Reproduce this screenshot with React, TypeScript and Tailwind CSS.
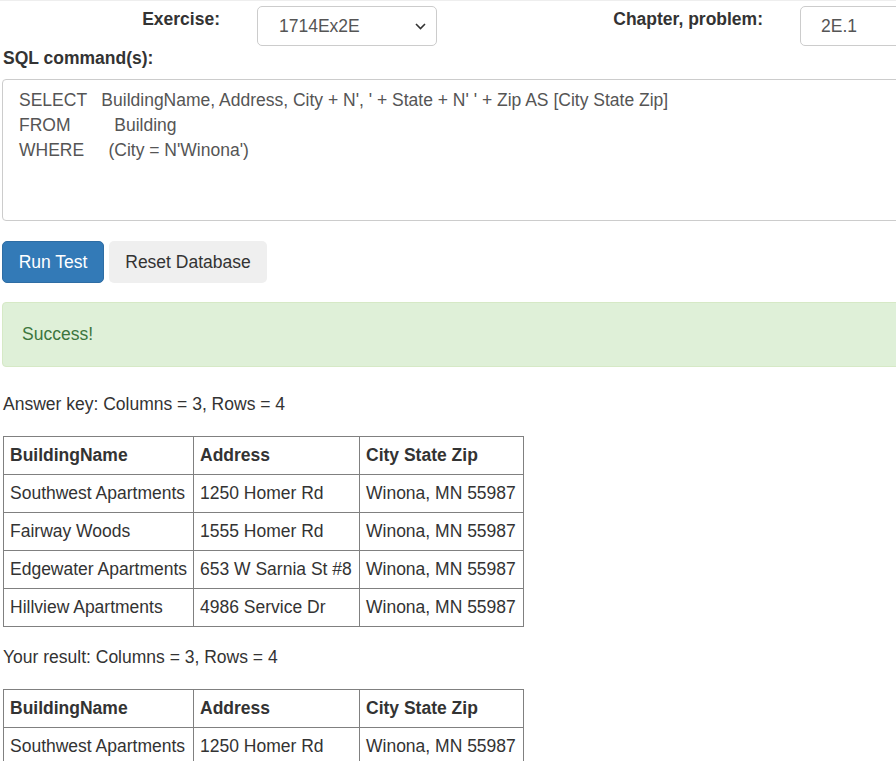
import React from 'react';

const sql = `SELECT   BuildingName, Address, City + N', ' + State + N' ' + Zip AS [City State Zip]
FROM         Building
WHERE     (City = N'Winona')`;

const headers = ['BuildingName', 'Address', 'City State Zip'];

const answerRows = [
  ['Southwest Apartments', '1250 Homer Rd', 'Winona, MN 55987'],
  ['Fairway Woods', '1555 Homer Rd', 'Winona, MN 55987'],
  ['Edgewater Apartments', '653 W Sarnia St #8', 'Winona, MN 55987'],
  ['Hillview Apartments', '4986 Service Dr', 'Winona, MN 55987'],
];

function ResultTable({ rows }: { rows: string[][] }) {
  return (
    <table className="ml-[1px] border-collapse table-fixed w-[520px]">
      <colgroup>
        <col className="w-[190px]" />
        <col className="w-[166px]" />
        <col className="w-[164px]" />
      </colgroup>
      <thead>
        <tr>
          {headers.map((h) => (
            <th key={h} className="border border-[#808080] px-[6px] py-[6px] text-left font-bold whitespace-nowrap">
              {h}
            </th>
          ))}
        </tr>
      </thead>
      <tbody>
        {rows.map((r, i) => (
          <tr key={i}>
            {r.map((c, j) => (
              <td key={j} className="border border-[#808080] px-[6px] py-[6px] whitespace-nowrap">
                {c}
              </td>
            ))}
          </tr>
        ))}
      </tbody>
    </table>
  );
}

export default function App() {
  return (
    <div
      className="w-[896px] h-[761px] overflow-hidden bg-white text-[#333] text-[17.5px] leading-[25px] border-t border-[#eee]"
      style={{ fontFamily: '"Liberation Sans", Arial, sans-serif' }}
    >
      <div className="pl-[2px] w-[1200px]">
        {/* Exercise / chapter row */}
        <div className="flex items-start pt-[5px]">
          <div className="w-[218px] text-right font-bold pt-[1px]">Exercise:</div>
          <div className="ml-[37px] w-[180px] h-[40px] border border-[#ccc] rounded-[5px] flex items-center justify-between pl-[21px] pr-[10px] text-[#555]">
            <span>1714Ex2E</span>
            <svg width="11" height="7" viewBox="0 0 11 7" fill="none">
              <path d="M1 1l4.5 4.5L10 1" stroke="#333" strokeWidth="1.6" />
            </svg>
          </div>
          <div className="w-[326px] text-right font-bold pt-[1px]">Chapter, problem:</div>
          <div className="ml-[37px] w-[200px] h-[40px] border border-[#ccc] rounded-[5px] flex items-center pl-[20px] text-[#555]">
            2E.1
          </div>
        </div>

        <div className="font-bold pl-[1px]">SQL command(s):</div>

        <div className="mt-[8px] w-[1100px] h-[142px] border border-[#ccc] rounded-[4px] pl-[16px] pt-[8px] text-[#555] whitespace-pre">
          {sql}
        </div>

        {/* Buttons */}
        <div className="flex gap-[5px] mt-[20px]">
          <button className="w-[102px] h-[42px] rounded-[5px] bg-[#337ab7] border border-[#2e6da4] text-white">
            Run Test
          </button>
          <button className="w-[158px] h-[42px] rounded-[5px] bg-[#efefef] text-[#333]">
            Reset Database
          </button>
        </div>

        <div className="mt-[19px] w-[1100px] h-[65px] bg-[#dff0d8] border border-[#d6e9c6] rounded-[4px] flex items-center pl-[19px] text-[#3c763d]">
          Success!
        </div>

        <div className="pl-[1px] mt-[25px]">Answer key: Columns = 3, Rows = 4</div>
        <div className="mt-[19px]">
          <ResultTable rows={answerRows} />
        </div>

        <div className="pl-[1px] mt-[18px]">Your result: Columns = 3, Rows = 4</div>
        <div className="mt-[19px]">
          <ResultTable rows={answerRows} />
        </div>
      </div>
    </div>
  );
}
